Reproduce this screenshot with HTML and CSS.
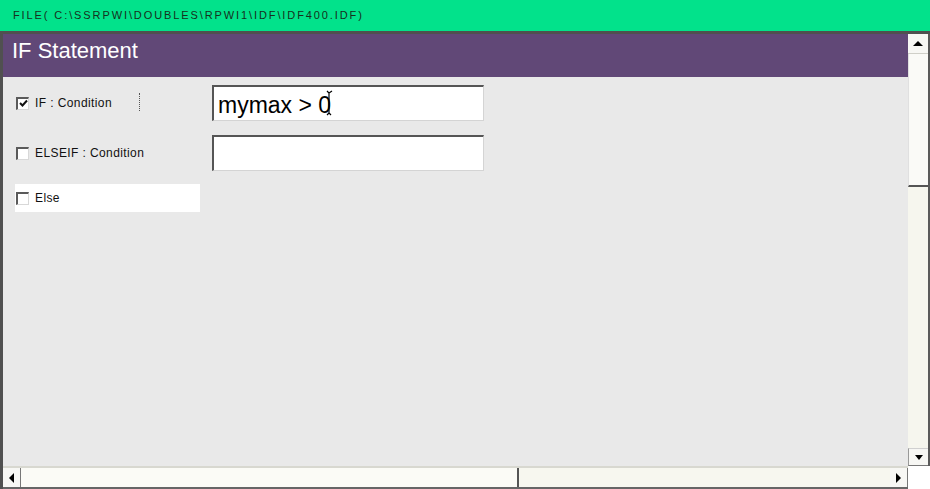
FILE: index.html
```html
<!DOCTYPE html>
<html>
<head>
<meta charset="utf-8">
<link rel="stylesheet" href="styles.css">
</head>
<body>
<div class="window">
  <div class="titlebar">FILE( C:\SSRPWI\DOUBLES\RPWI1\IDF\IDF400.IDF)</div>
  <div class="frame">
    <div class="main">
      <div class="header">IF Statement</div>
      <div class="content">
        <div class="row">
          <div class="labelcell">
            <span class="check checked">
              <svg width="9" height="9" viewBox="0 0 9 9"><path d="M1 4 L3.5 6.5 L8 1.5" fill="none" stroke="#111" stroke-width="2"/></svg>
            </span>
            <span class="label">IF : Condition</span>
            <span class="dots"></span>
          </div>
          <div class="input">mymax &gt; 0<svg class="ibeam" width="7" height="26" viewBox="0 0 7 26"><path d="M1 1 L3 3 L3 23 L5 25 M6 1 L3 3 M3 23 L1 25" fill="none" stroke="#000" stroke-width="1.2"/></svg></div>
        </div>
        <div class="row">
          <div class="labelcell">
            <span class="check"></span>
            <span class="label">ELSEIF : Condition</span>
          </div>
          <div class="input"></div>
        </div>
        <div class="elsebox">
          <span class="check"></span>
          <span class="label">Else</span>
        </div>
      </div>
    </div>
    <div class="vscroll">
      <div class="sbtn"><span class="tri up"></span></div>
      <div class="vthumb"></div>
      <div class="vtrack"></div>
      <div class="sbtn down-btn"><span class="tri down"></span></div>
    </div>
  </div>
  <div class="hrow">
    <div class="hscroll">
      <div class="sbtn hbtn"><span class="tri left"></span></div>
      <div class="hthumb"></div>
      <div class="htrack"></div>
      <div class="sbtn hbtn"><span class="tri right"></span></div>
    </div>
    <div class="corner"></div>
  </div>
</div>
</body>
</html>
```
FILE: styles.css
```css
html, body {
  margin: 0;
  padding: 0;
  background: #ffffff;
}
.window {
  width: 930px;
  height: 489px;
  display: flex;
  flex-direction: column;
  font-family: "Liberation Sans", Arial, sans-serif;
  overflow: hidden;
}
.titlebar {
  height: 31px;
  flex: none;
  background: #02e28b;
  color: #16301c;
  font-size: 11px;
  letter-spacing: 1.9px;
  padding-left: 13px;
  display: flex;
  align-items: center;
  box-sizing: border-box;
  padding-bottom: 2px;
}
.frame {
  flex: none;
  height: 435px;
  display: flex;
  border-top: 3px solid #505050;
  border-left: 3px solid #505050;
  box-sizing: border-box;
}
.main {
  width: 905px;
  display: flex;
  flex-direction: column;
}
.header {
  height: 43px;
  flex: none;
  background: #614877;
  color: #ffffff;
  font-size: 22px;
  padding-left: 9px;
  display: flex;
  align-items: center;
  padding-bottom: 9px;
  box-sizing: border-box;
}
.content {
  flex: 1;
  background: #e9e9e9;
  display: flex;
  flex-direction: column;
  padding: 8px 0 0 12px;
  gap: 14px;
}
.row {
  display: flex;
  align-items: center;
  height: 36px;
}
.labelcell {
  width: 197px;
  display: flex;
  align-items: center;
  position: relative;
  height: 36px;
}
.check {
  width: 13px;
  height: 13px;
  box-sizing: border-box;
  background: #ffffff;
  border-top: 2px solid #5a5a5a;
  border-left: 2px solid #5a5a5a;
  border-right: 1px solid #d8d8d8;
  border-bottom: 1px solid #d8d8d8;
  display: inline-flex;
  align-items: center;
  justify-content: center;
  flex: none;
  margin-left: 1px;
}
.label {
  font-size: 12px;
  color: #111;
  margin-left: 6px;
  letter-spacing: 0.4px;
}
.dots {
  position: absolute;
  left: 124px;
  top: 8px;
  height: 18px;
  border-left: 1px dotted #555;
}
.input {
  width: 272px;
  height: 36px;
  box-sizing: border-box;
  background: #ffffff;
  border-top: 2px solid #555;
  border-left: 2px solid #555;
  border-right: 1px solid #d4d4d4;
  border-bottom: 1px solid #d4d4d4;
  font-size: 23px;
  color: #000;
  padding-left: 4px;
  display: flex;
  align-items: center;
  padding-top: 3px;
}
.ibeam {
  margin-left: -5px;
  margin-top: -4px;
}
.elsebox {
  width: 185px;
  height: 28px;
  background: #ffffff;
  display: flex;
  align-items: center;
  margin-left: 0;
  margin-top: -1px;
}
.vscroll {
  width: 20px;
  display: flex;
  flex-direction: column;
  background: #f8f8f3;
  border-right: 2px solid #5a5a5a;
}
.sbtn {
  height: 20px;
  flex: none;
  background: #f7f7f4;
  border-bottom: 1px solid #cfcfc8;
  box-sizing: border-box;
  display: flex;
  align-items: center;
  justify-content: center;
}
.down-btn {
  height: 18px;
  border-top: 1px solid #d0d0d0;
  border-bottom: 1px solid #777;
  border-left: 1px solid #999;
  margin-bottom: 0;
}
.vthumb {
  height: 133px;
  flex: none;
  background: #fafaf7;
  border-left: 1px solid #e0e0e0;
  border-bottom: 2px solid #555;
  box-sizing: border-box;
}
.vtrack {
  flex: 1;
  background: #f6f6ee;
}
.tri {
  width: 0;
  height: 0;
  display: block;
}
.tri.up {
  border-left: 5px solid transparent;
  border-right: 5px solid transparent;
  border-bottom: 5px solid #000;
}
.tri.down {
  border-left: 4px solid transparent;
  border-right: 4px solid transparent;
  border-top: 5px solid #000;
}
.tri.left {
  border-top: 5px solid transparent;
  border-bottom: 5px solid transparent;
  border-right: 5px solid #000;
}
.tri.right {
  border-top: 5px solid transparent;
  border-bottom: 5px solid transparent;
  border-left: 5px solid #000;
}
.hrow {
  flex: none;
  height: 23px;
  display: flex;
  border-left: 3px solid #505050;
}
.hscroll {
  width: 905px;
  display: flex;
  background: #f8f8f1;
  border-bottom: 2px solid #666;
  border-top: 2px solid #d8d8d0;
  box-sizing: border-box;
}
.hbtn {
  width: 18px;
  height: auto;
  border-bottom: none;
  border-right: 1px solid #777;
}
.hthumb {
  width: 498px;
  flex: none;
  background: #fbfbf6;
  border-right: 2px solid #555;
  box-sizing: border-box;
}
.htrack {
  flex: 1;
  background: #f7f7ef;
}
.corner {
  flex: 1;
  background: #ffffff;
}
```
